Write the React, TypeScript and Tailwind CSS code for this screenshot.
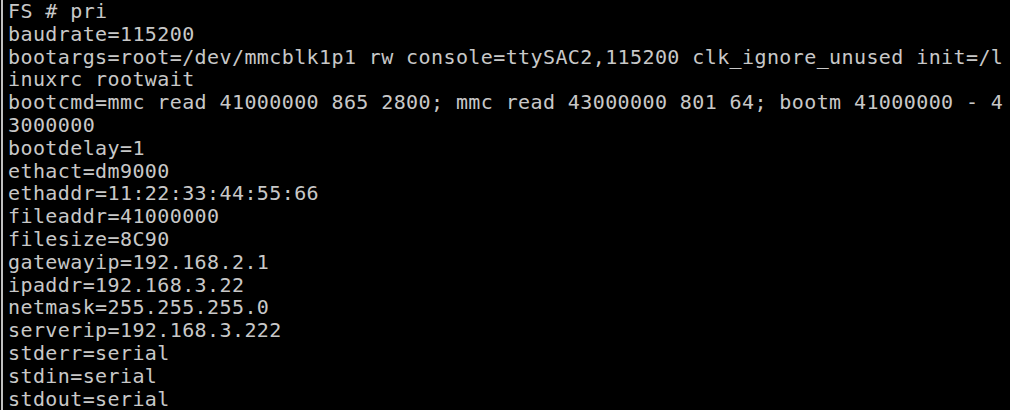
// 터미널 화면: U-Boot 환경 변수 출력
const lines: string[] = [
  'FS # pri',
  'baudrate=115200',
  'bootargs=root=/dev/mmcblk1p1 rw console=ttySAC2,115200 clk_ignore_unused init=/l',
  'inuxrc rootwait',
  'bootcmd=mmc read 41000000 865 2800; mmc read 43000000 801 64; bootm 41000000 - 4',
  '3000000',
  'bootdelay=1',
  'ethact=dm9000',
  'ethaddr=11:22:33:44:55:66',
  'fileaddr=41000000',
  'filesize=8C90',
  'gatewayip=192.168.2.1',
  'ipaddr=192.168.3.22',
  'netmask=255.255.255.0',
  'serverip=192.168.3.222',
  'stderr=serial',
  'stdin=serial',
  'stdout=serial',
];

function App() {
  return (
    <div className="w-[1010px] h-[410px] overflow-hidden bg-black pl-px">
      <div className="h-full border-l-2 border-[#c0c0c0] pl-[5px]">
        {lines.map((line, i) => (
          <div
            key={i}
            className="whitespace-pre text-[20px] leading-[22.8px] tracking-[0.4px] text-[#c8c8c8] font-['DejaVu_Sans_Mono',monospace]"
          >
            {line}
          </div>
        ))}
      </div>
    </div>
  );
}

export default App;
